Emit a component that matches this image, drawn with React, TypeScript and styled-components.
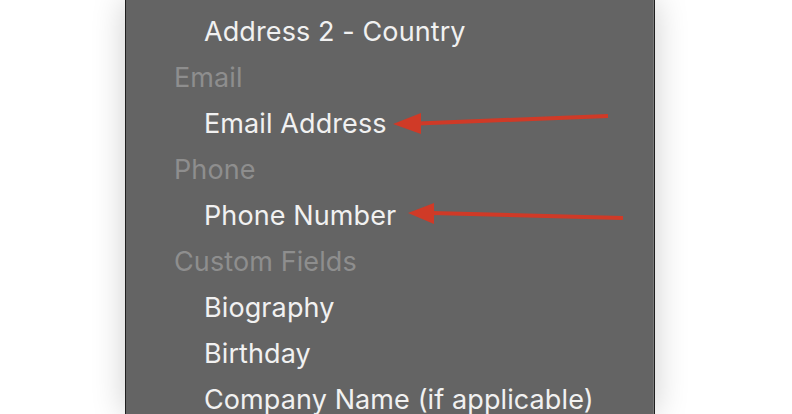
import styled, { createGlobalStyle } from "styled-components";

const GlobalStyle = createGlobalStyle`
  html, body {
    margin: 0;
    padding: 0;
    background: #ffffff;
    overflow: hidden;
  }
`;

const Page = styled.div`
  position: relative;
  width: 792px;
  height: 414px;
  overflow: hidden;
  background: #ffffff;
`;

const Panel = styled.div`
  position: relative;
  margin-left: 125px;
  width: 530px;
  height: 414px;
  background: #646464;
  border-left: 1px solid #1f1f1f;
  border-right: 1px solid #1f1f1f;
  box-shadow: 0 0 32px rgba(0, 0, 0, 0.2), inset -1px 0 0 #7a7a7a;
  padding: 9px 0 0 48px;
  box-sizing: border-box;
  font-family: Inter, "Noto Sans", sans-serif;
  font-size: 27px;
  letter-spacing: 0.1px;
`;

const Row = styled.div<{ header?: boolean }>`
  height: 46px;
  line-height: 46px;
  white-space: nowrap;
  padding-left: ${(p) => (p.header ? 0 : 30)}px;
  color: ${(p) => (p.header ? "#8e8e8e" : "#f1f1f1")};
`;

const Arrows = styled.svg`
  position: absolute;
  left: 0;
  top: 0;
  pointer-events: none;
`;

interface Item {
  label: string;
  header?: boolean;
}

const items: Item[] = [
  { label: "Address 2 - Country" },
  { label: "Email", header: true },
  { label: "Email Address" },
  { label: "Phone", header: true },
  { label: "Phone Number" },
  { label: "Custom Fields", header: true },
  { label: "Biography" },
  { label: "Birthday" },
  { label: "Company Name (if applicable)" },
];

const App = () => (
  <Page>
    <GlobalStyle />
    <Panel>
      {items.map((item) => (
        <Row key={item.label} header={item.header}>
          {item.label}
        </Row>
      ))}
    </Panel>
    <Arrows width="792" height="414" viewBox="0 0 792 414">
      <g fill="#d03a27" stroke="#d03a27">
        <line x1="418" y1="123.5" x2="608" y2="116" strokeWidth="4" />
        <polygon points="393,124 421,113 421,134" stroke="none" />
        <line x1="431" y1="213" x2="623" y2="218" strokeWidth="4" />
        <polygon points="408,213 434,203 434,224" stroke="none" />
      </g>
    </Arrows>
  </Page>
);

export default App;
